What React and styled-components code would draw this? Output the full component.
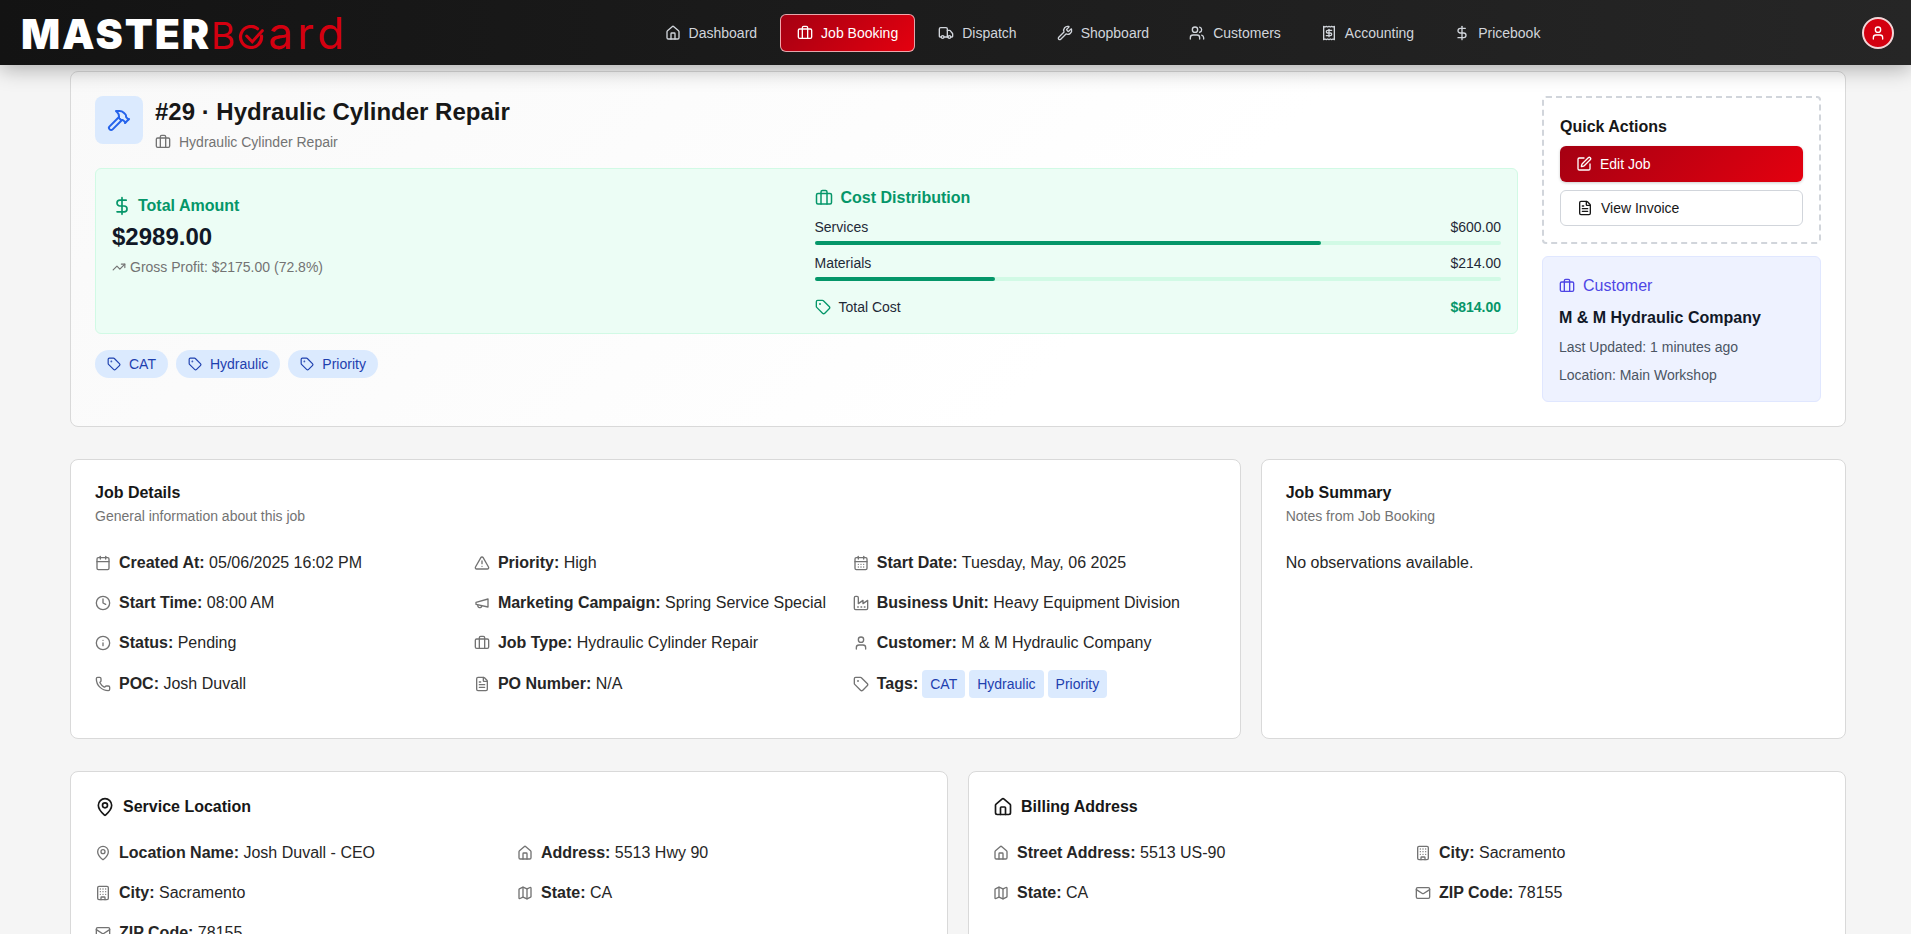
import React from 'react';
import styled, { createGlobalStyle } from 'styled-components';
import {
  Building,
  Briefcase,
  Calendar,
  CalendarDays,
  Clock,
  DollarSign,
  FileText,
  Hammer,
  House,
  Info,
  Mail,
  Map,
  MapPin,
  Phone,
  Receipt,
  SquarePen,
  Tag,
  TrendingUp,
  TriangleAlert,
  Truck,
  User,
  Users,
  Wrench,
} from 'lucide-react';

const GlobalStyle = createGlobalStyle`
  html, body {
    margin: 0;
    height: 934px;
    overflow: hidden;
    background: #f5f5f5;
    font-family: "Liberation Sans", Arial, sans-serif;
    color: #1f2937;
  }
  * { box-sizing: border-box; }
`;

const Header = styled.header`
  position: relative;
  z-index: 10;
  height: 65px;
  padding: 0 17px 0 21px;
  display: flex;
  align-items: center;
  justify-content: space-between;
  background: linear-gradient(90deg, #131313, #262626);
  box-shadow: 0 4px 20px rgba(0, 0, 0, 0.3);
`;

const Logo = styled.div`
  display: flex;
  align-items: baseline;
  width: 322px;
  height: 40px;
  white-space: nowrap;
`;

const LogoStrong = styled.span`
  font-family: Inter, sans-serif;
  font-weight: 900;
  font-size: 41px;
  line-height: 40px;
  letter-spacing: 1.9px;
  color: #fff;
`;

const LogoThin = styled.span`
  font-family: Inter, sans-serif;
  font-weight: 400;
  font-size: ${(p) => p.$size}px;
  line-height: 40px;
  letter-spacing: ${(p) => p.$spacing || 0}px;
  margin-left: ${(p) => p.$left || 0}px;
  color: #d40010;
`;

const LogoO = styled.svg`
  width: 26px;
  height: 24px;
  margin: 0 0 -1px 3px;
  flex: none;
`;

const Nav = styled.nav`
  display: flex;
  align-items: center;
  gap: 6px;
`;

const NavItem = styled.a`
  display: flex;
  align-items: center;
  gap: 8px;
  height: 38px;
  padding: 0 16px;
  border: 1px solid ${(p) => (p.$active ? 'rgba(255, 255, 255, 0.65)' : 'transparent')};
  border-radius: 6px;
  font-size: 14px;
  color: ${(p) => (p.$active ? '#fff' : '#d1d5db')};
  background: ${(p) => (p.$active ? 'linear-gradient(135deg, #a50012, #e4000f)' : 'transparent')};
`;

const Avatar = styled.div`
  width: 32px;
  height: 32px;
  border-radius: 50%;
  border: 2px solid #f3d5d7;
  background: #d40010;
  color: #fff;
  display: flex;
  align-items: center;
  justify-content: center;
`;

const Main = styled.main`
  padding: 6px 65px 0 70px;
`;

const Card = styled.section`
  background: #fff;
  border: 1px solid #d9d9d9;
  border-radius: 8px;
`;

const JobCard = styled(Card)`
  display: flex;
  gap: 24px;
  padding: 24px;
  background: linear-gradient(135deg, #f9f9f9, #ffffff 60%);
`;

const JobMain = styled.div`
  flex: 1;
  min-width: 0;
`;

const JobSide = styled.aside`
  width: 279px;
  flex: none;
  display: flex;
  flex-direction: column;
  gap: 12px;
`;

const TitleRow = styled.div`
  display: flex;
  gap: 12px;
`;

const IconBox = styled.div`
  width: 48px;
  height: 48px;
  border-radius: 8px;
  background: #dbeafe;
  color: #2563eb;
  display: flex;
  align-items: center;
  justify-content: center;
`;

const JobTitle = styled.h1`
  margin: 0;
  font-size: 24px;
  line-height: 32px;
  font-weight: 700;
  color: #171717;
`;

const JobSubtitle = styled.div`
  margin-top: 4px;
  display: flex;
  align-items: center;
  gap: 8px;
  font-size: 14px;
  line-height: 20px;
  color: #737373;
`;

const MoneyPanel = styled.div`
  margin-top: 16px;
  padding: 16px;
  height: 166px;
  display: grid;
  grid-template-columns: 1fr 1fr;
  gap: 16px;
  background: #ecfdf5;
  border: 1px solid #d1fae5;
  border-radius: 6px;
`;

const TotalBlock = styled.div`
  padding-top: 9px;
`;

const CostBlock = styled.div`
  padding-top: 1px;
`;

const GreenHeading = styled.div`
  display: flex;
  align-items: center;
  gap: ${(p) => p.$gap || 8}px;
  font-size: 16px;
  line-height: 24px;
  font-weight: 700;
  color: #059669;
`;

const Amount = styled.div`
  margin-top: 3px;
  font-size: 24px;
  line-height: 32px;
  font-weight: 700;
  color: #111827;
`;

const Profit = styled.div`
  margin-top: 4px;
  display: flex;
  align-items: center;
  gap: 4px;
  font-size: 14px;
  line-height: 20px;
  color: #737373;
`;

const CostLine = styled.div`
  margin-top: ${(p) => p.$top || 8}px;
  display: flex;
  align-items: center;
  justify-content: space-between;
  font-size: 14px;
  line-height: 20px;
  color: #1f2937;
`;

const CostLabel = styled.span`
  display: flex;
  align-items: center;
  gap: 8px;
  svg { color: #059669; }
`;

const CostTotal = styled.span`
  font-weight: 700;
  color: #059669;
`;

const Bar = styled.div`
  margin-top: 4px;
  height: 4px;
  border-radius: 2px;
  background: #d1fae5;
`;

const BarFill = styled.div`
  height: 100%;
  border-radius: 2px;
  background: #059669;
`;

const PillRow = styled.div`
  margin-top: 16px;
  display: flex;
  gap: 8px;
`;

const Pill = styled.span`
  display: flex;
  align-items: center;
  gap: 8px;
  height: 28px;
  padding: 0 12px;
  border-radius: 14px;
  background: #dbeafe;
  color: #1e40af;
  font-size: 14px;
`;

const QuickBox = styled.div`
  padding: 17px 16px 16px;
  border: 2px dashed #d1d5db;
  border-radius: 4px;
  background: #fff;
  display: flex;
  flex-direction: column;
  gap: 8px;
`;

const QuickTitle = styled.div`
  margin-bottom: -1px;
  font-size: 16px;
  line-height: 24px;
  font-weight: 700;
  color: #171717;
`;

const ActionButton = styled.button`
  height: 36px;
  padding: 0 16px;
  display: flex;
  align-items: center;
  gap: 8px;
  border-radius: 6px;
  font-family: inherit;
  font-size: 14px;
  border: ${(p) => (p.$primary ? 'none' : '1px solid #d1d5db')};
  color: ${(p) => (p.$primary ? '#fff' : '#171717')};
  background: ${(p) => (p.$primary ? 'linear-gradient(135deg, #a50012, #e4000f)' : '#fff')};
  box-shadow: ${(p) => (p.$primary ? '0 1px 3px rgba(0, 0, 0, 0.2)' : 'none')};
`;

const CustomerBox = styled.div`
  padding: 17px 16px 16px;
  background: #eef2ff;
  border: 1px solid #e0e7ff;
  border-radius: 6px;
`;

const CustomerLabel = styled.div`
  display: flex;
  align-items: center;
  gap: 8px;
  font-size: 16px;
  line-height: 24px;
  color: #4f46e5;
`;

const CustomerName = styled.div`
  margin-top: 8px;
  font-size: 16px;
  line-height: 24px;
  font-weight: 700;
  color: #111827;
`;

const CustomerNote = styled.div`
  margin-top: ${(p) => p.$top || 8}px;
  font-size: 14px;
  line-height: 20px;
  color: #4b5563;
`;

const DetailGrid = styled.div`
  margin-top: 32px;
  display: grid;
  grid-template-columns: 2fr 1fr;
  gap: 20px;
`;

const InfoCard = styled(Card)`
  padding: 21px 24px 39px;
  min-height: 280px;
`;

const CardTitle = styled.h2`
  margin: 0;
  font-size: 16px;
  line-height: 24px;
  font-weight: 700;
  color: #171717;
`;

const CardHint = styled.p`
  margin: 1px 0 0;
  font-size: 14px;
  line-height: 20px;
  color: #737373;
`;

const FieldGrid = styled.div`
  margin-top: ${(p) => p.$top}px;
  display: grid;
  grid-template-columns: repeat(${(p) => p.$cols}, 1fr);
  gap: 16px;
`;

const Field = styled.div`
  display: flex;
  align-items: center;
  gap: 8px;
  font-size: 16px;
  line-height: 24px;
  color: #262626;
  svg { color: #737373; flex: none; }
`;

const FieldText = styled.span`
  white-space: nowrap;
  b { font-weight: 700; }
`;

const TagChip = styled.span`
  display: inline-flex;
  align-items: center;
  height: 28px;
  padding: 0 8px;
  border-radius: 4px;
  background: #dbeafe;
  color: #1e40af;
  font-size: 14px;
`;

const TagChips = styled.span`
  display: flex;
  gap: 4px;
  margin: -1px 0 -1px -4px;
`;

const SummaryText = styled.p`
  margin: 25px 0 0;
  font-size: 16px;
  line-height: 24px;
  color: #262626;
`;

const AddressGrid = styled.div`
  margin-top: 32px;
  display: grid;
  grid-template-columns: 1fr 1fr;
  gap: 20px;
`;

const AddressCard = styled(Card)`
  padding: 23px 24px 24px;
`;

const AddressTitle = styled.div`
  display: flex;
  align-items: center;
  gap: 8px;
  font-size: 16px;
  line-height: 24px;
  font-weight: 700;
  color: #171717;
  svg { color: #171717; }
`;

// older lucide drawings, the current package draws these two differently
const Megaphone = ({ size = 16 }) => (
  <svg
    width={size}
    height={size}
    viewBox="0 0 24 24"
    fill="none"
    stroke="currentColor"
    strokeWidth="2"
    strokeLinecap="round"
    strokeLinejoin="round"
  >
    <path d="m3 11 18-5v12L3 14v-3z" />
    <path d="M11.6 16.8a3 3 0 1 1-5.8-1.6" />
  </svg>
);

const Factory = ({ size = 16 }) => (
  <svg
    width={size}
    height={size}
    viewBox="0 0 24 24"
    fill="none"
    stroke="currentColor"
    strokeWidth="2"
    strokeLinecap="round"
    strokeLinejoin="round"
  >
    <path d="M2 20a2 2 0 0 0 2 2h16a2 2 0 0 0 2-2V8l-7 5V8l-7 5V4a2 2 0 0 0-2-2H4a2 2 0 0 0-2 2Z" />
    <path d="M17 18h1" />
    <path d="M12 18h1" />
    <path d="M7 18h1" />
  </svg>
);

const navItems = [
  { label: 'Dashboard', icon: House },
  { label: 'Job Booking', icon: Briefcase, active: true },
  { label: 'Dispatch', icon: Truck },
  { label: 'Shopboard', icon: Wrench },
  { label: 'Customers', icon: Users },
  { label: 'Accounting', icon: Receipt },
  { label: 'Pricebook', icon: DollarSign },
];

const tags = ['CAT', 'Hydraulic', 'Priority'];

const jobFields = [
  { icon: Calendar, label: 'Created At:', value: '05/06/2025 16:02 PM' },
  { icon: TriangleAlert, label: 'Priority:', value: 'High' },
  { icon: CalendarDays, label: 'Start Date:', value: 'Tuesday, May, 06 2025' },
  { icon: Clock, label: 'Start Time:', value: '08:00 AM' },
  { icon: Megaphone, label: 'Marketing Campaign:', value: 'Spring Service Special' },
  { icon: Factory, label: 'Business Unit:', value: 'Heavy Equipment Division' },
  { icon: Info, label: 'Status:', value: 'Pending' },
  { icon: Briefcase, label: 'Job Type:', value: 'Hydraulic Cylinder Repair' },
  { icon: User, label: 'Customer:', value: 'M & M Hydraulic Company' },
  { icon: Phone, label: 'POC:', value: 'Josh Duvall' },
  { icon: FileText, label: 'PO Number:', value: 'N/A' },
];

const serviceFields = [
  { icon: MapPin, label: 'Location Name:', value: 'Josh Duvall - CEO' },
  { icon: House, label: 'Address:', value: '5513 Hwy 90' },
  { icon: Building, label: 'City:', value: 'Sacramento' },
  { icon: Map, label: 'State:', value: 'CA' },
  { icon: Mail, label: 'ZIP Code:', value: '78155' },
];

const billingFields = [
  { icon: House, label: 'Street Address:', value: '5513 US-90' },
  { icon: Building, label: 'City:', value: 'Sacramento' },
  { icon: Map, label: 'State:', value: 'CA' },
  { icon: Mail, label: 'ZIP Code:', value: '78155' },
];

const renderField = ({ icon: Icon, label, value }) => (
  <Field key={label}>
    <Icon size={16} />
    <FieldText>
      <b>{label}</b> {value}
    </FieldText>
  </Field>
);

const App = () => (
  <>
    <GlobalStyle />
    <Header>
      <Logo>
        <LogoStrong>MASTER</LogoStrong>
        <LogoThin $size={37}>B</LogoThin>
        <LogoO viewBox="0 0 26 24" fill="none" stroke="#d40010" strokeWidth="3.2" strokeLinecap="round">
          <path d="M19.5 3.7A10.5 10.5 0 1 0 23.5 11" />
          <path d="M8.7 11l5.6 5.7L24.3 5.7" strokeWidth="3" />
        </LogoO>
        <LogoThin $size={44} $spacing={4.2} $left={4}>
          ard
        </LogoThin>
      </Logo>
      <Nav>
        {navItems.map(({ label, icon: Icon, active }) => (
          <NavItem key={label} $active={active}>
            <Icon size={16} />
            {label}
          </NavItem>
        ))}
      </Nav>
      <Avatar>
        <User size={16} />
      </Avatar>
    </Header>
    <Main>
      <JobCard>
        <JobMain>
          <TitleRow>
            <IconBox>
              <Hammer size={24} />
            </IconBox>
            <div>
              <JobTitle>#29 · Hydraulic Cylinder Repair</JobTitle>
              <JobSubtitle>
                <Briefcase size={16} />
                Hydraulic Cylinder Repair
              </JobSubtitle>
            </div>
          </TitleRow>
          <MoneyPanel>
            <TotalBlock>
              <GreenHeading $gap={6}>
                <DollarSign size={20} />
                Total Amount
              </GreenHeading>
              <Amount>$2989.00</Amount>
              <Profit>
                <TrendingUp size={14} />
                Gross Profit: $2175.00 (72.8%)
              </Profit>
            </TotalBlock>
            <CostBlock>
              <GreenHeading>
                <Briefcase size={18} />
                Cost Distribution
              </GreenHeading>
              <CostLine $top={7}>
                <span>Services</span>
                <span>$600.00</span>
              </CostLine>
              <Bar>
                <BarFill style={{ width: `${(600 / 814) * 100}%` }} />
              </Bar>
              <CostLine>
                <span>Materials</span>
                <span>$214.00</span>
              </CostLine>
              <Bar>
                <BarFill style={{ width: `${(214 / 814) * 100}%` }} />
              </Bar>
              <CostLine $top={16}>
                <CostLabel>
                  <Tag size={16} />
                  Total Cost
                </CostLabel>
                <CostTotal>$814.00</CostTotal>
              </CostLine>
            </CostBlock>
          </MoneyPanel>
          <PillRow>
            {tags.map((tag) => (
              <Pill key={tag}>
                <Tag size={14} />
                {tag}
              </Pill>
            ))}
          </PillRow>
        </JobMain>
        <JobSide>
          <QuickBox>
            <QuickTitle>Quick Actions</QuickTitle>
            <ActionButton $primary>
              <SquarePen size={16} />
              Edit Job
            </ActionButton>
            <ActionButton>
              <FileText size={16} />
              View Invoice
            </ActionButton>
          </QuickBox>
          <CustomerBox>
            <CustomerLabel>
              <Briefcase size={16} />
              Customer
            </CustomerLabel>
            <CustomerName>M &amp; M Hydraulic Company</CustomerName>
            <CustomerNote $top={7}>Last Updated: 1 minutes ago</CustomerNote>
            <CustomerNote>Location: Main Workshop</CustomerNote>
          </CustomerBox>
        </JobSide>
      </JobCard>

      <DetailGrid>
        <InfoCard>
          <CardTitle>Job Details</CardTitle>
          <CardHint>General information about this job</CardHint>
          <FieldGrid $cols={3} $top={25}>
            {jobFields.map(renderField)}
            <Field>
              <Tag size={16} />
              <FieldText>
                <b>Tags:</b>
              </FieldText>
              <TagChips>
                {tags.map((tag) => (
                  <TagChip key={tag}>{tag}</TagChip>
                ))}
              </TagChips>
            </Field>
          </FieldGrid>
        </InfoCard>
        <InfoCard>
          <CardTitle>Job Summary</CardTitle>
          <CardHint>Notes from Job Booking</CardHint>
          <SummaryText>No observations available.</SummaryText>
        </InfoCard>
      </DetailGrid>

      <AddressGrid>
        <AddressCard>
          <AddressTitle>
            <MapPin size={20} />
            Service Location
          </AddressTitle>
          <FieldGrid $cols={2} $top={22}>
            {serviceFields.map(renderField)}
          </FieldGrid>
        </AddressCard>
        <AddressCard>
          <AddressTitle>
            <House size={20} />
            Billing Address
          </AddressTitle>
          <FieldGrid $cols={2} $top={22}>
            {billingFields.map(renderField)}
          </FieldGrid>
        </AddressCard>
      </AddressGrid>
    </Main>
  </>
);

export default App;
